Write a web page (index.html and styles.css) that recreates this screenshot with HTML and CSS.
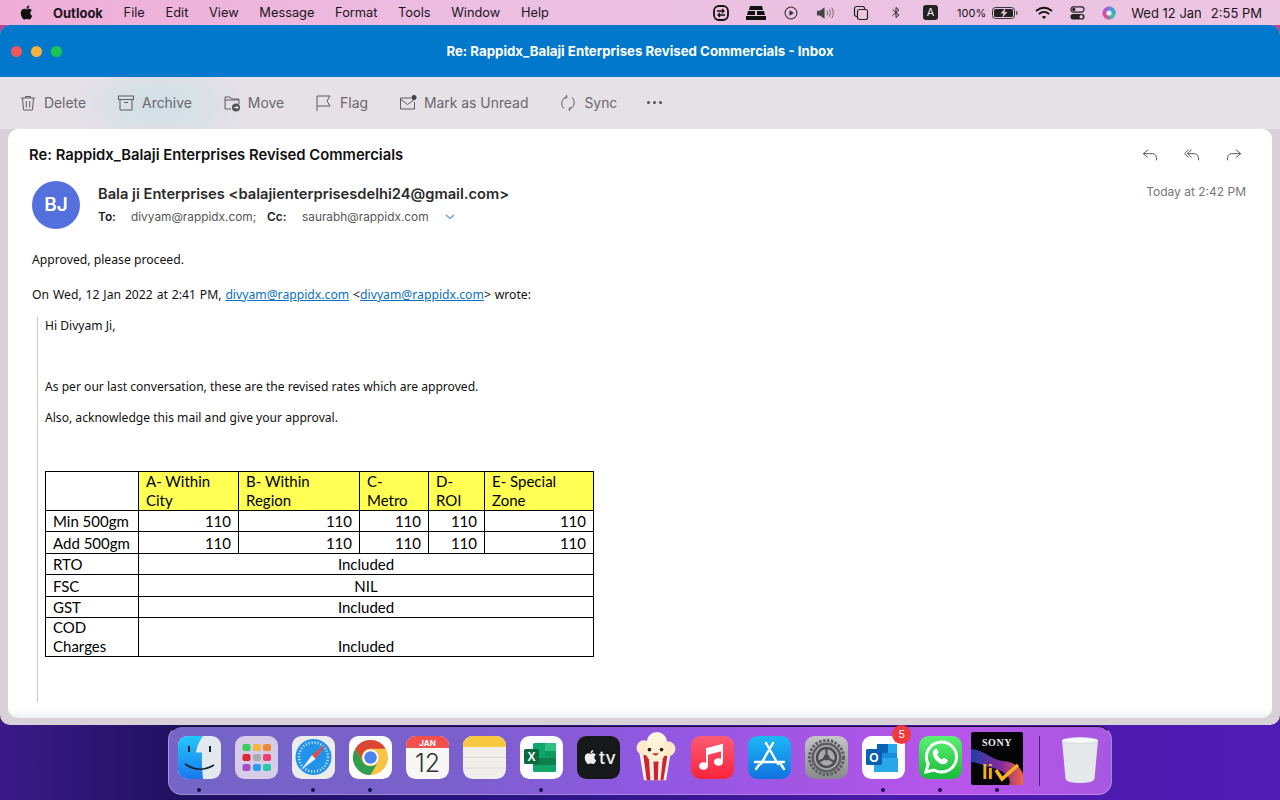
FILE: index.html
```html
<!DOCTYPE html>
<html lang="en">

<head>
    <meta charset="UTF-8">
    <meta name="viewport" content="width=device-width, initial-scale=1.0">
    <title>Outlook</title>
    <link rel="stylesheet" href="styles.css">
</head>

<body>
    <!-- menu bar -->
    <div class="menubar">
        <svg class="apple" viewBox="0 0 24 24" width="17" height="17"><path fill="#111" d="M18.71 19.5c-.83 1.24-1.71 2.45-3.05 2.47-1.34.03-1.77-.79-3.29-.79-1.53 0-2 .77-3.27.82-1.31.05-2.3-1.32-3.14-2.53C4.25 17 2.94 12.45 4.7 9.39c.87-1.52 2.43-2.48 4.12-2.51 1.28-.02 2.5.87 3.29.87.78 0 2.26-1.07 3.81-.91.65.03 2.47.26 3.64 1.98-.09.06-2.17 1.28-2.15 3.81.03 3.02 2.65 4.03 2.68 4.04-.03.07-.42 1.44-1.38 2.83M13 3.5c.73-.83 1.94-1.46 2.94-1.5.13 1.17-.34 2.35-1.04 3.19-.69.85-1.83 1.51-2.95 1.42-.15-1.15.41-2.35 1.05-3.11z"/></svg>
        <ul class="menu">
            <li class="menu-app">Outlook</li>
            <li>File</li>
            <li>Edit</li>
            <li>View</li>
            <li>Message</li>
            <li>Format</li>
            <li>Tools</li>
            <li>Window</li>
            <li>Help</li>
        </ul>
        <div class="status">
            <div class="status-icons">
                <svg viewBox="0 0 18 18" width="18" height="18"><rect x="2" y="2" width="14" height="14" rx="5" fill="none" stroke="#111" stroke-width="1.8"/><path d="M5 7h7m-2-2 2 2-2 2M13 11H6m2-2-2 2 2 2" fill="none" stroke="#111" stroke-width="1.3"/></svg>
                <svg viewBox="0 0 22 18" width="22" height="18"><path d="M5 2h12l1 4H4zM3 7h7v4H2zM12 7h7l1 4h-8zM1 12h20v4H1z" fill="#111"/></svg>
                <svg viewBox="0 0 16 16" width="14" height="14"><circle cx="8" cy="8" r="6.8" fill="none" stroke="#333" stroke-width="1.2"/><path d="M6.3 4.8v6.4L11.4 8z" fill="#333"/></svg>
                <svg viewBox="0 0 20 16" width="19" height="16"><path d="M1 5.5h3L9 2v12l-5-3.5H1z" fill="#444"/><path d="M11.5 5.5q1.5 2.5 0 5M14 4q2.5 4 0 8M16.5 2.500q3.500 5.500 0 11" fill="none" stroke="#666" stroke-width="1"/></svg>
                <svg viewBox="0 0 16 16" width="16" height="16"><rect x="1.500" y="1.500" width="10" height="10" rx="2" fill="none" stroke="#222" stroke-width="1.200"/><rect x="4.500" y="4.500" width="10" height="10" rx="2" fill="#ecc5e3" stroke="#222" stroke-width="1.200"/></svg>
                <svg viewBox="0 0 12 16" width="10" height="15"><path d="M2 4.500 9.500 11 6 14V2l3.500 3L2 11.500" fill="none" stroke="#222" stroke-width="1.200"/></svg>
                <span class="input-key">A</span>
            </div>
            <span class="battery-pct">100%</span>
            <svg class="battery" viewBox="0 0 26 12" width="26" height="12"><rect x="0.500" y="0.500" width="22" height="11" rx="3" fill="none" stroke="#333"/><rect x="2" y="2" width="19" height="8" rx="1.500" fill="#222"/><rect x="24" y="4" width="1.500" height="4" rx="0.700" fill="#555"/><path d="M13.500 1 8.500 6.500h3L10 11l5.500-6h-3z" fill="#ecc5e3"/></svg>
            <svg viewBox="0 0 18 14" width="18" height="14"><path d="M1 5q8-6.500 16 0M3.800 8q5.200-4.200 10.400 0" fill="none" stroke="#111" stroke-width="1.800"/><path d="M6.800 10.800q2.200-1.600 4.400 0L9 13z" fill="#111"/></svg>
            <svg viewBox="0 0 16 16" width="15" height="16"><rect x="1" y="1.500" width="14" height="5.500" rx="2.700" fill="none" stroke="#222" stroke-width="1.200"/><circle cx="4" cy="4.200" r="1.800" fill="#222"/><rect x="0.500" y="9" width="15" height="6" rx="3" fill="#222"/><circle cx="12" cy="12" r="1.800" fill="#ecc5e3"/></svg>
            <svg viewBox="0 0 14 14" width="14" height="14"><circle cx="7" cy="7" r="6.500" fill="#b05acb"/><path d="M7 .5A6.500 6.500 0 0 1 13.500 7H7z" fill="#3aa6d8"/><path d="M7 13.500A6.500 6.500 0 0 1 .5 7H7z" fill="#e0508f"/><path d="M13.500 7A6.500 6.500 0 0 1 7 13.500V7z" fill="#36c0b0"/><circle cx="7" cy="7" r="2.600" fill="#e8eef8"/></svg>
            <span class="clock"><span>Wed 12 Jan</span><span>2:55 PM</span></span>
        </div>
    </div>

    <!-- mail window -->
    <div class="window">
        <div class="titlebar">
            <div class="lights">
                <i class="light red"></i>
                <i class="light yellow"></i>
                <i class="light green"></i>
            </div>
            <div class="title">Re: Rappidx_Balaji Enterprises Revised Commercials - Inbox</div>
        </div>
        <div class="toolbar">
            <div class="tool">
                <svg viewBox="0 0 18 18"><path d="M2 4h14M6.500 4V2.500h5V4M3.500 4l1 12h9l1-12M7.300 7v6.500M10.700 7v6.500" fill="none" stroke="#5f5b60" stroke-width="1"/></svg>
                <span>Delete</span>
            </div>
            <div class="tool">
                <svg viewBox="0 0 18 18"><rect x="1.500" y="2" width="15" height="3.500" fill="none" stroke="#5f5b60" stroke-width="1"/><path d="M3 5.500V16h12V5.500M7 8.500h4" fill="none" stroke="#5f5b60" stroke-width="1"/></svg>
                <span>Archive</span>
            </div>
            <div class="tool">
                <svg viewBox="0 0 18 18"><path d="M8 15H2V3h5l1.500 2H16v5M2 6h14" fill="none" stroke="#5f5b60" stroke-width="1"/><circle cx="13" cy="13.500" r="4" fill="#55525a"/><path d="M11 13.500h4m-1.500-1.500 1.500 1.500L13.500 15" fill="none" stroke="#eee" stroke-width="1"/></svg>
                <span>Move</span>
            </div>
            <div class="tool">
                <svg viewBox="0 0 18 18"><path d="M2 17V2h13l-3 5 3 5H2" fill="none" stroke="#5f5b60" stroke-width="1"/></svg>
                <span>Flag</span>
            </div>
            <div class="tool">
                <svg viewBox="0 0 18 18"><path d="M12 4H1.500v11h14V8" fill="none" stroke="#5f5b60" stroke-width="1"/><path d="m1.500 5 7 5.500 7-5" fill="none" stroke="#5f5b60" stroke-width="1"/><circle cx="15" cy="3.500" r="2.500" fill="#444"/></svg>
                <span>Mark as Unread</span>
            </div>
            <div class="tool">
                <svg viewBox="0 0 18 18"><path d="M5 14.500a7 7 0 0 1 2-11.500M13 3.500a7 7 0 0 1-2 11.500M7.500 1 8 3.500 5.500 4.500M10.500 17 10 14.500l2.500-1" fill="none" stroke="#5f5b60" stroke-width="1"/></svg>
                <span>Sync</span>
            </div>
            <div class="more"><i></i><i></i><i></i></div>
        </div>

        <div class="card">
            <div class="subject-row">
                <h1>Re: Rappidx_Balaji Enterprises Revised Commercials</h1>
                <div class="actions">
                    <svg viewBox="0 0 18 14" width="16" height="14"><path d="M7 1 1.500 5.500 7 10M1.500 5.500H12q4.500 0 4.500 7.500" fill="none" stroke="#444" stroke-width="1"/></svg>
                    <svg viewBox="0 0 18 14" width="16" height="14"><path d="M5 1 .8 5.500 5 10M8.500 1 4 5.500 8.500 10M4 5.500h8q4.500 0 4.500 7.500" fill="none" stroke="#444" stroke-width="1"/></svg>
                    <svg viewBox="0 0 18 14" width="16" height="14"><path d="M11 1l5.500 4.500L11 10M16.500 5.500H6Q1.500 5.500 1.500 13" fill="none" stroke="#444" stroke-width="1"/></svg>
                </div>
            </div>
            <div class="sender-row">
                <div class="avatar">BJ</div>
                <div class="sender">
                    <div class="from">Bala ji Enterprises &lt;balajienterprisesdelhi24@gmail.com&gt;</div>
                    <div class="recipients">
                        <b class="to-label">To:</b>
                        <span class="to-addr">divyam@rappidx.com;</span>
                        <b class="cc-label">Cc:</b>
                        <span class="cc-addr">saurabh@rappidx.com</span>
                        <svg viewBox="0 0 10 6" width="10" height="6"><path d="m1 1 4 3.500L9 1" fill="none" stroke="#5ba4dc" stroke-width="1.300"/></svg>
                    </div>
                </div>
                <div class="date">Today at 2:42 PM</div>
            </div>

            <div class="body">
                <p class="reply">Approved, please proceed.</p>
                <p class="attrib">On Wed, 12 Jan 2022 at 2:41 PM, <a href="#">divyam@rappidx.com</a> &lt;<a href="#">divyam@rappidx.com</a>&gt; wrote:</p>
                <div class="quote">
                    <p class="q-hi">Hi Divyam Ji,</p>
                    <p class="q-rates">As per our last conversation, these are the revised rates which are approved.</p>
                    <p class="q-ack">Also, acknowledge this mail and give your approval.</p>
                    <table class="rates">
                        <colgroup>
                            <col class="c0"><col class="c1"><col class="c2"><col class="c3"><col class="c4"><col class="c5">
                        </colgroup>
                        <tr class="r-head">
                            <td></td>
                            <td class="hl">A- Within City</td>
                            <td class="hl">B- Within Region</td>
                            <td class="hl">C- Metro</td>
                            <td class="hl">D- ROI</td>
                            <td class="hl">E- Special Zone</td>
                        </tr>
                        <tr class="r-a">
                            <td>Min 500gm</td>
                            <td class="num">110</td><td class="num">110</td><td class="num">110</td><td class="num">110</td><td class="num">110</td>
                        </tr>
                        <tr class="r-b">
                            <td>Add 500gm</td>
                            <td class="num">110</td><td class="num">110</td><td class="num">110</td><td class="num">110</td><td class="num">110</td>
                        </tr>
                        <tr class="r-a"><td>RTO</td><td class="mid" colspan="5">Included</td></tr>
                        <tr class="r-b"><td>FSC</td><td class="mid" colspan="5">NIL</td></tr>
                        <tr class="r-a"><td>GST</td><td class="mid" colspan="5">Included</td></tr>
                        <tr class="r-last"><td>COD Charges</td><td class="mid" colspan="5">Included</td></tr>
                    </table>
                </div>
            </div>
        </div>
    </div>

    <!-- dock -->
    <div class="dock">
        <div class="app running">
            <svg viewBox="0 0 43 43"><defs><clipPath id="rr"><rect width="43" height="43" rx="9.500"/></clipPath><linearGradient id="gf" x1="0" y1="0" x2="0" y2="1"><stop offset="0" stop-color="#22c8f8"/><stop offset="1" stop-color="#1a78ee"/></linearGradient></defs><g clip-path="url(#rr)"><rect width="43" height="43" fill="#e4e9f0"/><path d="M0 0h25q-6 8-7 16.500h6q-.5 12 1 26.500H0z" fill="url(#gf)"/><path d="M11 10v6M32 10v6" stroke="#123" stroke-width="2"/><path d="M7 28q14 10 29 1" fill="none" stroke="#123" stroke-width="1.600"/></g></svg>
        </div>
        <div class="app">
            <svg viewBox="0 0 43 43"><rect width="43" height="43" rx="9.500" fill="#d6cce8"/><rect x="7.500" y="8" width="8" height="7" rx="2" fill="#35d05e"/><rect x="18" y="8" width="8" height="7" rx="2" fill="#f4b63c"/><rect x="28" y="8" width="8" height="7" rx="2" fill="#f08a32"/><rect x="7.500" y="18" width="8" height="7" rx="2" fill="#e0252e"/><rect x="18" y="18" width="8" height="7" rx="2" fill="#a4aeb0"/><rect x="28" y="18" width="8" height="7" rx="2" fill="#ee3f68"/><rect x="7.500" y="28" width="8" height="7" rx="2" fill="#a24ec8"/><rect x="18" y="28" width="8" height="7" rx="2" fill="#2a9bf0"/><rect x="28" y="28" width="8" height="7" rx="2" fill="#28c8a8"/></svg>
        </div>
        <div class="app running">
            <svg viewBox="0 0 43 43"><rect width="43" height="43" rx="9.500" fill="#ececec"/><circle cx="21.500" cy="21" r="18" fill="#2293e8"/><circle cx="21.500" cy="21" r="14.500" fill="none" stroke="#d8eeff" stroke-width="2.500" stroke-dasharray="1 2"/><path d="m34 8-14 11 3.500 4z" fill="#f04a40"/><path d="M9 34 20 19l3.500 4z" fill="#eef2f5"/></svg>
        </div>
        <div class="app running">
            <svg viewBox="0 0 43 43"><rect width="43" height="43" rx="9.500" fill="#fff"/><circle cx="21.500" cy="21.500" r="17.500" fill="#f7c546"/><path d="M21.500 12.750H36.660A17.500 17.500 0 0 0 6.340 12.750L13.900 25.900A8.750 8.750 0 0 1 21.500 12.750z" fill="#dc4435"/><path d="M6.340 12.750A17.500 17.500 0 0 0 21.500 39L29.100 25.900A8.750 8.750 0 0 1 13.900 25.900z" fill="#2f9e4f"/><circle cx="21.500" cy="21.500" r="8" fill="#fff"/><circle cx="21.500" cy="21.500" r="6.300" fill="#4a84ee"/></svg>
        </div>
        <div class="app">
            <svg viewBox="0 0 43 43"><defs><clipPath id="rc"><rect width="43" height="43" rx="9.500"/></clipPath></defs><g clip-path="url(#rc)"><rect width="43" height="43" fill="#f8f7f6"/><rect width="43" height="12" fill="#f2504c"/></g><text class="cal-mon" x="21.500" y="9.500" text-anchor="middle">JAN</text><text class="cal-day" x="21.500" y="36" text-anchor="middle">12</text></svg>
        </div>
        <div class="app">
            <svg viewBox="0 0 43 43"><defs><clipPath id="rn"><rect width="43" height="43" rx="9.500"/></clipPath></defs><g clip-path="url(#rn)"><rect width="43" height="43" fill="#f1efec"/><rect width="43" height="11" fill="#f8c840"/><path d="M0 21.500h43M0 32h43" stroke="#dcd9d4"/></g></svg>
        </div>
        <div class="app running">
            <svg viewBox="0 0 43 43"><rect width="43" height="43" rx="9.500" fill="#fff"/><rect x="13" y="7" width="23" height="29" rx="1.500" fill="#10a56a"/><path d="M25 7h11v8H25z" fill="#2ebd84"/><path d="M13 22h23v7H13z" fill="#0d7f4d"/><path d="M25 15h11v7H25z" fill="#0f9a60"/><rect x="4" y="13" width="15" height="15" rx="1.500" fill="#0b6b3e"/><text class="xl" x="11.500" y="25" text-anchor="middle">X</text></svg>
        </div>
        <div class="app">
            <svg viewBox="0 0 43 43"><rect width="43" height="43" rx="9.500" fill="#16191a"/><svg x="5" y="12" width="17" height="18" viewBox="0 0 24 24"><path fill="#eee" d="M18.710 19.500c-.83 1.240-1.710 2.450-3.050 2.470-1.340.03-1.770-.79-3.290-.79-1.530 0-2 .77-3.270.82-1.310.05-2.300-1.320-3.140-2.530C4.250 17 2.940 12.450 4.700 9.390c.87-1.520 2.430-2.480 4.120-2.510 1.280-.02 2.500.87 3.290.87.78 0 2.260-1.070 3.810-.91.65.03 2.470.26 3.640 1.980-.09.06-2.170 1.280-2.150 3.810.03 3.020 2.650 4.030 2.680 4.040-.03.07-.42 1.440-1.380 2.830M13 3.500c.73-.83 1.940-1.460 2.940-1.500.13 1.170-.34 2.350-1.040 3.190-.69.85-1.830 1.510-2.950 1.420-.15-1.150.41-2.350 1.050-3.110z"/></svg><text class="tv" x="22" y="28">tv</text></svg>
        </div>
        <div class="app app-pop">
            <svg viewBox="0 0 43 54"><path d="M4 22 38 22 33 52H9z" fill="#f4f0ea"/><path d="M8 22l4 30h4l-2-30zM19 22l1 30h4l1-30zM30 22l-3 30h3l5-30z" fill="#d2232d"/><circle cx="9" cy="17" r="8" fill="#fbe9c8"/><circle cx="23" cy="11" r="11" fill="#fff4dc"/><circle cx="35" cy="18" r="8" fill="#fbe9c8"/><circle cx="21.500" cy="21" r="11" fill="#fdf0d5"/><circle cx="15" cy="19" r="2" fill="#222"/><circle cx="28" cy="19" r="2" fill="#222"/><path d="M18 23q3.500 5 7 0z" fill="#c92a2a"/></svg>
        </div>
        <div class="app">
            <svg viewBox="0 0 43 43"><defs><linearGradient id="gm" x1="0" y1="0" x2="0" y2="1"><stop offset="0" stop-color="#fb5c74"/><stop offset="1" stop-color="#fa233b"/></linearGradient></defs><rect width="43" height="43" rx="9.500" fill="url(#gm)"/><path d="M16 13v16.500M31 9v16.500M16 13l15-4v5l-15 4z" fill="#fff" stroke="#fff" stroke-width="2"/><ellipse cx="12.500" cy="30" rx="4.500" ry="3.800" fill="#fff"/><ellipse cx="27.500" cy="26" rx="4.500" ry="3.800" fill="#fff"/></svg>
        </div>
        <div class="app">
            <svg viewBox="0 0 43 43"><defs><linearGradient id="ga" x1="0" y1="0" x2="0" y2="1"><stop offset="0" stop-color="#1cb8f4"/><stop offset="1" stop-color="#1272e0"/></linearGradient></defs><rect width="43" height="43" rx="9.500" fill="url(#ga)"/><path d="M18 7 30 28M25 7 13 28M7 26h29M32 27l4 6M11 29l-3 4" fill="none" stroke="#fff" stroke-width="2.400" stroke-linecap="round"/></svg>
        </div>
        <div class="app">
            <svg viewBox="0 0 43 43"><defs><linearGradient id="gs" x1="0" y1="0" x2="0" y2="1"><stop offset="0" stop-color="#c4c6c8"/><stop offset="1" stop-color="#87898b"/></linearGradient></defs><rect width="43" height="43" rx="9.500" fill="url(#gs)"/><circle cx="21.500" cy="21.500" r="17" fill="none" stroke="#5c5e60" stroke-width="3" stroke-dasharray="2.500 1.500"/><circle cx="21.500" cy="21.500" r="15" fill="#5c5e60"/><circle cx="21.500" cy="21.500" r="12.500" fill="#a8aaac"/><circle cx="21.500" cy="21.500" r="9.500" fill="none" stroke="#4c4e50" stroke-width="2.500"/><circle cx="21.500" cy="21.500" r="3" fill="#4c4e50"/><path d="M21.500 21.500V11M21.500 21.500l9 5M21.500 21.500l-9 5" stroke="#4c4e50" stroke-width="2.200"/></svg>
        </div>
        <div class="app running">
            <svg viewBox="0 0 43 43"><rect width="43" height="43" rx="9.500" fill="#fff"/><rect x="15" y="8" width="20" height="9" fill="#0a63b8"/><rect x="15" y="17" width="20" height="7" fill="#1690de"/><rect x="26" y="8" width="9" height="9" fill="#28a8ea"/><path d="M12 22 36 22V36H12z" fill="#28a8ea"/><rect x="4" y="13" width="16" height="16" rx="1.500" fill="#0a5fb0"/><text class="ol" x="12" y="25.500" text-anchor="middle">O</text></svg>
            <span class="badge">5</span>
        </div>
        <div class="app running">
            <svg viewBox="0 0 43 43"><defs><linearGradient id="gw" x1="0" y1="0" x2="0" y2="1"><stop offset="0" stop-color="#5cf075"/><stop offset="1" stop-color="#18bb3a"/></linearGradient></defs><rect width="43" height="43" rx="9.500" fill="url(#gw)"/><path d="M7 36l2.200-8A15 15 0 1 1 15 34z" fill="none" stroke="#fff" stroke-width="3"/><path d="M16 13q-3 2-2 6 2 6 8 9 4 1 6.500-2 .5-2-.5-2.500l-3-1.500q-1 0-2 1.500-3-1-5-5 1.500-1 1.500-2l-1.500-3.500q-1-.5-2 0z" fill="#fff"/></svg>
        </div>
        <div class="app app-sony running">
            <svg viewBox="0 0 52 53"><defs><linearGradient id="gl" x1="0" y1="0" x2="1" y2="0"><stop offset="0" stop-color="#1f3fa8"/><stop offset="0.600" stop-color="#8a2a9c"/><stop offset="1" stop-color="#f0663c"/></linearGradient></defs><rect width="52" height="53" rx="2" fill="#050508"/><path d="M0 17C14 18 20 28 32 29 42 30 49 34 52 42V53H38C42 44 30 38 22 36 12 34 6 30 0 30z" fill="url(#gl)"/><text class="sony" x="26" y="14" text-anchor="middle">SONY</text><text class="liv" x="11" y="47">li</text><path d="M25 38l6 9 16-14" fill="none" stroke="#f5b21e" stroke-width="3.500"/></svg>
        </div>
        <div class="dock-sep"></div>
        <div class="app app-trash">
            <svg viewBox="0 0 40 48"><path d="M2 4q18-5 36 0l-3.500 39q-1.500 4-14.500 4T5.500 43z" fill="#e4e8ea"/><ellipse cx="20" cy="4.500" rx="18" ry="3" fill="#f5f7f8" stroke="#cfd4d6" stroke-width="0.600"/></svg>
        </div>
    </div>
</body>

</html>
```

FILE: styles.css
```css
* {
    box-sizing: border-box;
}

html,
body {
    margin: 0;
    height: 800px;
    overflow: hidden;
}

body {
    display: flex;
    flex-direction: column;
    font-family: Inter, "Liberation Sans", sans-serif;
    background-image:
        linear-gradient(to bottom, #c0408f 0, #c0408f 60px, transparent 60px),
        linear-gradient(to right, #3a1a88 0, #1f1160 14%, #2a1482 40%, #4a1aa8 70%, #4f1bb4 100%);
}

/* menu bar */
.menubar {
    height: 25px;
    flex: none;
    display: flex;
    align-items: center;
    padding: 0 18px 0 18px;
    color: #1c1420;
    font-size: 12.8px;
    background-image: linear-gradient(to right, #efaed8, #ebbfe2 40%, #ecc6e3);
}

.apple {
    margin-right: 18px;
}

.menu {
    display: flex;
    gap: 20.7px;
    list-style: none;
    margin: 0;
    padding: 0;
}

.menu-app {
    font-size: 13px;
    font-weight: 700;
}

.status {
    margin-left: auto;
    display: flex;
    align-items: center;
    gap: 17px;
    font-size: 12.5px;
}

.status-icons {
    display: grid;
    grid-template-columns: repeat(7, 35px);
    justify-items: center;
    align-items: center;
    margin-right: -8px;
}

.input-key {
    width: 15px;
    height: 15px;
    border-radius: 3px;
    background: #222;
    color: #eee;
    font-size: 11px;
    line-height: 15px;
    text-align: center;
}

.battery-pct {
    font-size: 11px;
    margin-right: -11px;
}

.clock {
    display: flex;
    gap: 9px;
    font-size: 13px;
    margin-left: -2px;
}

/* window */
.window {
    height: 700px;
    flex: none;
    display: flex;
    flex-direction: column;
    border-radius: 10px;
    overflow: hidden;
    background-color: #d8d2d8;
}

.titlebar {
    height: 52px;
    flex: none;
    display: flex;
    align-items: center;
    position: relative;
    background-color: #0278cd;
}

.lights {
    display: flex;
    gap: 9px;
    padding-left: 11px;
}

.light {
    width: 11px;
    height: 11px;
    border-radius: 50%;
}

.red {
    background-color: #f0565a;
}

.yellow {
    background-color: #f8b13c;
}

.green {
    background-color: #1cc552;
}

.title {
    position: absolute;
    left: 0;
    right: 0;
    text-align: center;
    color: #fff;
    font-size: 13.25px;
    font-weight: 700;
}

.toolbar {
    height: 52px;
    flex: none;
    display: flex;
    align-items: center;
    gap: 32px;
    padding: 0 0 1px 20px;
    color: #6a666b;
    font-size: 13.9px;
    background-color: #e6e1e7;
    background-image: radial-gradient(ellipse 90px 45px at 160px 28px, #cde0e6, transparent);
}

.tool {
    display: flex;
    align-items: center;
    gap: 8px;
}

.tool svg {
    width: 18px;
    height: 18px;
    margin: 0 -1px;
}

.more {
    display: flex;
    gap: 3px;
    margin-left: -2px;
}

.more i {
    width: 3px;
    height: 3px;
    border-radius: 50%;
    background-color: #555;
}

.card {
    flex: 1;
    margin: 0 8px 7px;
    padding: 0 22px 0 21px;
    border-radius: 10px;
    overflow: hidden;
    background-color: #fff;
    background-image: linear-gradient(to bottom, transparent 580px, #f2f2f2);
}

.subject-row {
    display: flex;
    justify-content: space-between;
    align-items: center;
    height: 52px;
}

h1 {
    margin: 0;
    font-size: 14.8px;
    font-weight: 600;
    color: #111;
}

.actions {
    display: flex;
    gap: 26px;
    padding: 0 8px 0 0;
}

.sender-row {
    display: flex;
    align-items: flex-start;
    padding-left: 3px;
}

.avatar {
    width: 48px;
    height: 48px;
    flex: none;
    border-radius: 50%;
    background-color: #5470dc;
    color: #fff;
    font-size: 19px;
    font-weight: 600;
    line-height: 48px;
    text-align: center;
}

.sender {
    flex: 1;
    padding: 4px 0 0 18px;
}

.from {
    font-size: 14.7px;
    font-weight: 600;
    color: #2b2b2b;
    line-height: 18px;
}

.recipients {
    display: flex;
    align-items: center;
    height: 18px;
    margin-top: 5px;
    font-size: 11.85px;
    color: #555;
}

.recipients b {
    color: #222;
    font-weight: 600;
}

.to-label {
    width: 33px;
}

.to-addr {
    width: 136px;
}

.cc-label {
    width: 35px;
}

.cc-addr {
    width: 143px;
}

.date {
    font-size: 12px;
    color: #777;
    padding-top: 3px;
    margin-right: 4px;
}

/* message */
.body {
    font-family: "Noto Sans", "Open Sans", sans-serif;
    font-size: 12.2px;
    color: #111;
    padding-left: 3px;
}

.body p {
    margin: 0;
    line-height: 18px;
}

.reply {
    padding-top: 22px;
}

.attrib {
    padding-top: 17px;
    word-spacing: 0.7px;
}

.attrib a {
    color: #0a70c0;
}

.quote {
    margin: 13px 0 0 5px;
    padding: 0 0 45px 7px;
    border-left: 1px solid #c9c9c9;
    font-size: 12.1px;
}

.quote .q-hi {
    padding-top: 0;
}

.quote .q-rates {
    padding-top: 43px;
}

.quote .q-ack {
    padding-top: 13px;
}

.rates {
    margin-top: 44px;
    width: 548px;
    table-layout: fixed;
    border-collapse: collapse;
    font-family: Lato, "Liberation Sans", sans-serif;
    font-size: 15px;
    line-height: 19px;
    color: #000;
}

.rates td {
    border: 1px solid #000;
    padding: 0 7px;
    vertical-align: bottom;
}

.c0 { width: 93px; }
.c1 { width: 100px; }
.c2 { width: 121px; }
.c3 { width: 69px; }
.c4 { width: 56px; }
.c5 { width: 109px; }

.hl {
    background-color: #ffff54;
}

.num {
    text-align: right;
}

.mid {
    text-align: center;
}

.r-head { height: 39px; }
.r-a { height: 21px; }
.r-b { height: 22px; }
.r-last { height: 39px; }

.r-a td,
.r-b td {
    line-height: 20px;
}

/* dock */
.dock {
    width: 944px;
    height: 69px;
    flex: none;
    margin: 1px auto 0;
    padding-left: 9px;
    display: flex;
    align-items: flex-start;
    gap: 14px;
    border: 1px solid rgba(255, 255, 255, 0.28);
    border-top-color: #1a1030;
    border-radius: 14px;
    background-image: linear-gradient(to right, #7465c6, #7a60cc 30%, #8f58e0 50%, #b855ea 85%, #a758e0);
}

.app {
    width: 43px;
    height: 43px;
    flex: none;
    margin-top: 9px;
    position: relative;
}

.app svg {
    display: block;
}

.running::after {
    content: "";
    position: absolute;
    left: 19px;
    top: 52px;
    width: 4px;
    height: 4px;
    border-radius: 50%;
    background-color: #14104a;
}

.app-pop svg {
    width: 43px;
    height: 50px;
    margin-top: -4px;
}

.app-sony {
    width: 52px;
    margin: 5px -5px 0;
}

.app-sony svg {
    width: 52px;
    height: 53px;
}

.app-sony.running::after {
    left: 24px;
    top: 56px;
}

.app-trash {
    width: 40px;
}

.app-trash svg {
    width: 40px;
    height: 48px;
}

.dock-sep {
    width: 1px;
    height: 50px;
    flex: none;
    margin: 9px 6px 0 7px;
    background-color: rgba(40, 10, 80, 0.7);
}

.badge {
    position: absolute;
    top: -11px;
    right: -6px;
    width: 19px;
    height: 19px;
    border-radius: 50%;
    background-color: #f03a3c;
    color: #fff;
    font-size: 11px;
    line-height: 19px;
    text-align: center;
}

.cal-mon {
    font-family: Inter, sans-serif;
    font-size: 8px;
    font-weight: 700;
    fill: #fff;
}

.cal-day {
    font-family: Inter, sans-serif;
    font-size: 25px;
    font-weight: 300;
    fill: #333;
}

.xl,
.ol {
    font-family: "Liberation Sans", sans-serif;
    font-size: 12px;
    font-weight: 700;
    fill: #fff;
}

.tv {
    font-family: Inter, sans-serif;
    font-size: 18px;
    font-weight: 500;
    fill: #eee;
}

.sony {
    font-family: "Liberation Serif", serif;
    font-size: 10px;
    font-weight: 700;
    letter-spacing: 0.6px;
    fill: #eee;
}

.liv {
    font-family: "Liberation Sans", sans-serif;
    font-size: 20px;
    font-weight: 700;
    fill: #f5b21e;
}
```
